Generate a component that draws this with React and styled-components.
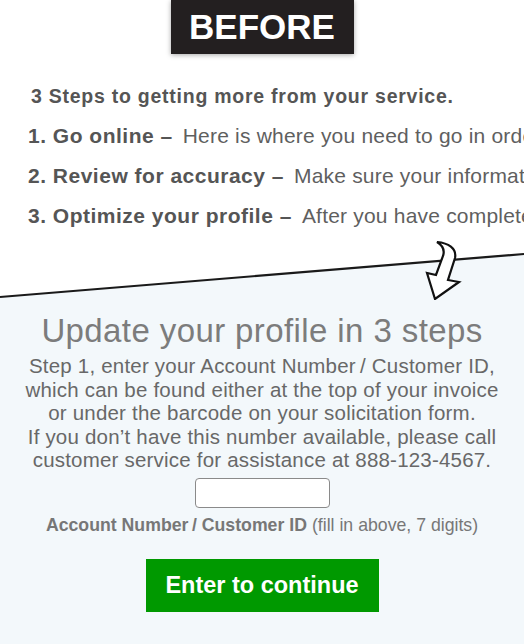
import React from "react";
import styled, { createGlobalStyle } from "styled-components";

const GlobalStyle = createGlobalStyle`
  html, body {
    margin: 0;
    padding: 0;
    background: #ffffff;
  }
  body {
    font-family: "Liberation Sans", Arial, Helvetica, sans-serif;
    -webkit-font-smoothing: antialiased;
  }
`;

const Page = styled.div`
  width: 524px;
  min-height: 644px;
  display: flex;
  flex-direction: column;
  overflow: hidden;
`;

const Top = styled.section`
  display: flex;
  flex-direction: column;
  background: #ffffff;
`;

const Badge = styled.div`
  align-self: center;
  width: 183px;
  height: 54px;
  background: #231f20;
  color: #ffffff;
  font-weight: 700;
  font-size: 35px;
  display: flex;
  align-items: center;
  justify-content: center;
  box-shadow: 0 1px 5px rgba(0, 0, 0, 0.35);
`;

const Intro = styled.div`
  padding: 30px 0 8px 30px;
  display: flex;
  flex-direction: column;
`;

const IntroHeading = styled.h2`
  margin: 0 0 0 1px;
  font-size: 19.5px;
  line-height: 24px;
  font-weight: 700;
  color: #555555;
  letter-spacing: 0.75px;
  white-space: nowrap;
`;

const StepList = styled.ol`
  list-style: none;
  margin: 16px 0 0 -2px;
  padding: 0;
  display: flex;
  flex-direction: column;
  gap: 16px;
`;

const Step = styled.li`
  font-size: 21px;
  line-height: 24px;
  color: #5f5f5f;
  white-space: nowrap;
  letter-spacing: 0.2px;
`;

const StepTitle = styled.strong`
  font-weight: 700;
  color: #555555;
  letter-spacing: 0.5px;
  margin-right: 10px;
`;

const Divider = styled.svg`
  display: block;
  width: 524px;
  height: 64px;
  flex-shrink: 0;
`;

const Panel = styled.section`
  flex: 1;
  background: #f3f8fb;
  display: flex;
  flex-direction: column;
  align-items: center;
  text-align: center;
  padding-bottom: 30px;
`;

const Title = styled.h1`
  margin: 13px 0 0;
  font-size: 33px;
  line-height: 36px;
  font-weight: 400;
  color: #7c7c7c;
  letter-spacing: 0.4px;
`;

const Body = styled.p`
  margin: 5px 0 0;
  font-size: 20.5px;
  line-height: 23.5px;
  color: #686868;
  letter-spacing: 0.2px;
`;

const AccountInput = styled.input`
  margin-top: 6px;
  width: 135px;
  height: 30px;
  box-sizing: border-box;
  border: 1.5px solid #8a8a8a;
  border-radius: 4px;
  background: #ffffff;
  outline: none;
  font-size: 16px;
  text-align: center;
`;

const Label = styled.div`
  margin-top: 7px;
  font-size: 17.7px;
  line-height: 20px;
  color: #777777;
`;

const LabelStrong = styled.strong`
  font-weight: 700;
  margin-right: 5px;
`;

const ContinueButton = styled.button`
  margin-top: 24px;
  width: 233px;
  height: 53px;
  border: none;
  background: #009900;
  color: #ffffff;
  font-family: inherit;
  font-weight: 700;
  font-size: 23.5px;
  cursor: pointer;
`;

const steps = [
  {
    title: "1. Go online \u2013",
    text: "Here is where you need to go in order to update your details online.",
  },
  {
    title: "2. Review for accuracy \u2013",
    text: "Make sure your information is correct and current.",
  },
  {
    title: "3. Optimize your profile \u2013",
    text: "After you have completed your review, add the final details.",
  },
];

function SlantDivider() {
  return (
    <Divider viewBox="0 0 524 64" aria-hidden="true">
      <polygon points="0,61 524,18 524,64 0,64" fill="#f3f8fb" />
      <line x1="0" y1="61" x2="524" y2="18" stroke="#1a1a1a" strokeWidth="2.2" />
      <path
        d="M437,6 C448,7 457,12 455,22 L448,44 L459,46 L435,63 L427,37 L436,39 L443,20 C445,14 442,9 437,6 Z"
        fill="#ffffff"
        stroke="#111111"
        strokeWidth="2.2"
        strokeLinejoin="miter"
      />
    </Divider>
  );
}

export default function App() {
  return (
    <>
      <GlobalStyle />
      <Page>
        <Top>
          <Badge>BEFORE</Badge>
          <Intro>
            <IntroHeading>3 Steps to getting more from your service.</IntroHeading>
            <StepList>
              {steps.map((s) => (
                <Step key={s.title}>
                  <StepTitle>{s.title}</StepTitle>
                  {s.text}
                </Step>
              ))}
            </StepList>
          </Intro>
        </Top>
        <SlantDivider />
        <Panel>
          <Title>Update your profile in 3 steps</Title>
          <Body>
            Step 1, enter your Account Number&thinsp;/ Customer ID,
            <br />
            which can be found either at the top of your invoice
            <br />
            or under the barcode on your solicitation form.
            <br />
            If you don&rsquo;t have this number available, please call
            <br />
            customer service for assistance at 888-123-4567.
          </Body>
          <AccountInput type="text" aria-label="Account Number / Customer ID" />
          <Label>
            <LabelStrong>Account Number&thinsp;/ Customer ID</LabelStrong>
            (fill in above, 7 digits)
          </Label>
          <ContinueButton type="button">Enter to continue</ContinueButton>
        </Panel>
      </Page>
    </>
  );
}
